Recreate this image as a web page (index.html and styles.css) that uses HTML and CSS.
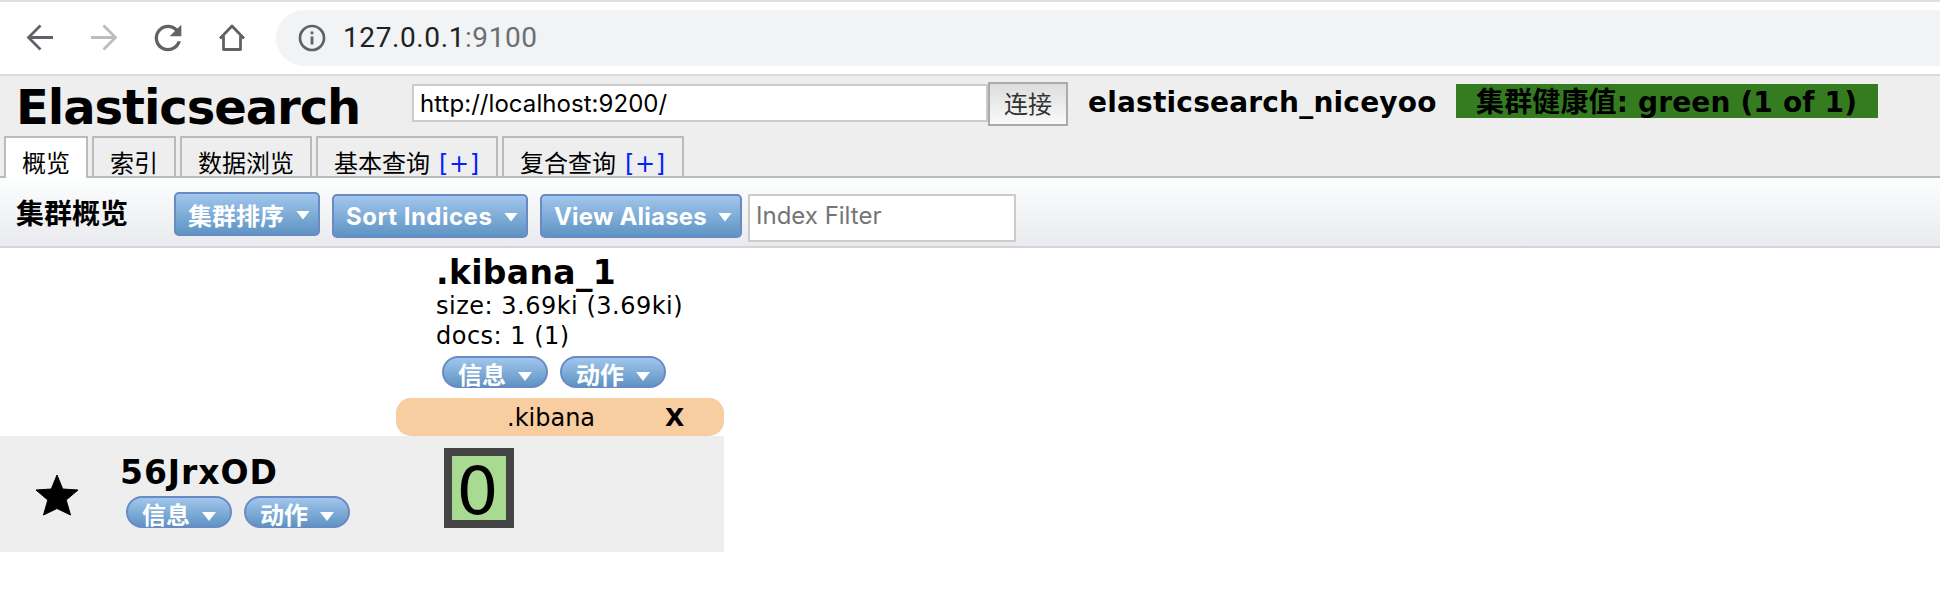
FILE: index.html
```html
<!DOCTYPE html>
<html lang="zh-CN">
<head>
<meta charset="utf-8">
<title>elasticsearch-head</title>
<link rel="stylesheet" href="styles.css">
</head>
<body>
<nav class="browser">
  <svg class="nav-icon" viewBox="0 0 40 40"><path d="M33 19.500H9M20.500 7.500l-12 12 12 12" fill="none" stroke="#5f6368" stroke-width="2.800"/></svg>
  <svg class="nav-icon" viewBox="0 0 40 40"><path d="M7 19.500h24M19.500 7.500l12 12-12 12" fill="none" stroke="#babcbe" stroke-width="2.800"/></svg>
  <svg class="nav-icon" viewBox="0 0 24 24"><path fill="#5f6368" d="M17.650 6.350C16.200 4.900 14.210 4 12 4c-4.420 0-7.990 3.580-7.990 8s3.570 8 7.990 8c3.730 0 6.840-2.550 7.730-6h-2.080c-.82 2.330-3.040 4-5.650 4-3.310 0-6-2.690-6-6s2.690-6 6-6c1.660 0 3.140.69 4.220 1.780L13 11h7V4l-2.350 2.350z"/></svg>
  <svg class="nav-icon" viewBox="0 0 40 40"><path d="M8 20.500L20 8l12 12.500M11.500 18v13.500h17V18" fill="none" stroke="#5f6368" stroke-width="2.800" stroke-linejoin="round"/></svg>
  <div class="address">
    <svg class="info-icon" viewBox="0 0 28 28"><circle cx="14" cy="14" r="12" fill="none" stroke="#5f6368" stroke-width="2.700"/><path d="M12.600 7.500h2.800v2.800h-2.800zM12.600 12.500h2.800v8h-2.800z" fill="#5f6368"/></svg>
    <span class="host">127.0.0.1<span class="port">:9100</span></span>
  </div>
</nav>
<header class="header">
  <div class="connect">
    <h1 class="brand">Elasticsearch</h1>
    <input class="uri" type="text" value="http://localhost:9200/">
    <button class="connect-button">连接</button>
    <span class="cluster-name">elasticsearch_niceyoo</span>
    <span class="health">集群健康值: green (1 of 1)</span>
  </div>
  <div class="tabs">
    <div class="tab active">概览</div>
    <div class="tab">索引</div>
    <div class="tab wide">数据浏览</div>
    <div class="tab plus">基本查询<a class="add">[+]</a></div>
    <div class="tab plus">复合查询<a class="add">[+]</a></div>
  </div>
</header>
<section class="toolbar">
  <h2 class="toolbar-title">集群概览</h2>
  <button class="menu sort-cluster">集群排序<i class="caret"></i></button>
  <button class="menu sort-indices">Sort Indices<i class="caret"></i></button>
  <button class="menu aliases">View Aliases<i class="caret"></i></button>
  <input class="filter" type="text" placeholder="Index Filter">
</section>
<main class="cluster">
  <div class="index-head">
    <div class="index-info">
      <div class="title index-title">.kibana_1</div>
      <div class="stat">size: 3.69ki (3.69ki)</div>
      <div class="stat">docs: 1 (1)</div>
      <div class="pills"><button class="pill">信息<i class="caret"></i></button><button class="pill">动作<i class="caret"></i></button></div>
    </div>
    <div class="alias"><span class="alias-name">.kibana</span><b class="remove">X</b></div>
  </div>
  <div class="node">
    <svg class="star" viewBox="0 0 44 42"><path d="M22 1l5.700 14 15.300 1-11.800 10 4.300 15L22 34.500 8.500 41l4.300-15L1 16l15.300-1z" stroke="#000" stroke-linejoin="round"/></svg>
    <div class="node-info">
      <div class="title node-title">56JrxOD</div>
      <div class="pills"><button class="pill">信息<i class="caret"></i></button><button class="pill">动作<i class="caret"></i></button></div>
    </div>
    <div class="shard">0</div>
  </div>
</main>
</body>
</html>
```
FILE: styles.css
```css
* { box-sizing: border-box; }
body { margin: 0; background: #fff; color: #000; font: 24px/30px "DejaVu Sans", "Noto Sans CJK SC", sans-serif; height: 594px; }
h1, h2 { margin: 0; }
button, input { margin: 0; padding: 0; border-radius: 0; outline: 0; flex: none; }

.browser { height: 76px; border-top: 2px solid #dfe0e5; border-bottom: 2px solid #dadbdf; padding: 8px 0 0 20px; display: flex; gap: 24px; }
.nav-icon { width: 40px; height: 40px; margin-top: 8px; flex: none; }
.address { flex: 1; height: 56px; border-radius: 28px 0 0 28px; background: #f1f3f4; display: flex; align-items: center; padding-left: 22px; }
.info-icon { width: 28px; height: 28px; }
.host { margin-left: 17px; font: 28px/56px Roboto, sans-serif; letter-spacing: .6px; color: #202124; white-space: nowrap; }
.port { color: #6b6e72; }

.header { height: 102px; background: #eee; border-bottom: 2px solid #bbb; }
.connect { height: 60px; padding-top: 6px; display: flex; align-items: flex-start; white-space: nowrap; }
.brand { width: 396px; margin: 5px 0 0 16px; font: bold 48px/40px "DejaVu Sans", sans-serif; letter-spacing: -1.050px; }
.uri { width: 576px; height: 38px; margin-top: 2px; border: 2px solid #ccc; padding: 0 6px; background: #fff; font: 24px "Inter", sans-serif; letter-spacing: .05px; }
.connect-button { width: 80px; height: 44px; padding-bottom: 4px; border: 2px solid #aaa; background: linear-gradient(#ddd, #fafafa); color: #333; font: 24px "Noto Sans CJK SC", sans-serif; }
.cluster-name { width: 368px; margin: 2px 0 0 20px; font: bold 28px/37px "DejaVu Sans", sans-serif; letter-spacing: .2px; }
.health { width: 422px; height: 34px; margin-top: 2px; padding-left: 20px; background: #357c21; font: bold 28px/37px "DejaVu Sans", "Noto Sans CJK SC", sans-serif; letter-spacing: .15px; }
.tabs { display: flex; gap: 4px; padding-left: 4px; }
.tab { width: 84px; height: 40px; border: 2px solid #bbb; border-bottom: 0; padding: 9px 0 0 16px; line-height: 30px; white-space: nowrap; font-family: "Noto Sans CJK SC", sans-serif; }
.tab.active { height: 42px; background: #fff; }
.tab.wide { width: 132px; }
.tab.plus { width: 182px; }
.add { margin-left: 9px; color: #0022ff; font: 24px/30px "DejaVu Sans", sans-serif; letter-spacing: .6px; }

.toolbar { height: 70px; display: flex; align-items: flex-start; padding: 16px 0 0 16px; border-bottom: 2px solid #d3d5d8; background: linear-gradient(#fdfefe, #e9eaed); }
.toolbar-title { width: 158px; margin-top: -1px; font: bold 28px/38px "Noto Sans CJK SC", sans-serif; }
.menu { display: flex; align-items: center; justify-content: space-between; height: 44px; border: 2px solid #6a8ac6; border-radius: 5px; padding: 0 8px 0 12px; background: linear-gradient(#a1c6ec, #5f94c3); color: #fff; font: bold 24px "Inter", "Noto Sans CJK SC", sans-serif; white-space: nowrap; }
.caret { width: 14px; height: 9px; background: #fff; clip-path: polygon(0 0, 100% 0, 50% 100%); }
.menu .caret { margin-top: 2px; }
.sort-cluster { width: 146px; margin: -2px 12px 0 0; }
.sort-indices { width: 196px; margin-right: 12px; letter-spacing: .5px; }
.aliases { width: 202px; margin-right: 6px; letter-spacing: .2px; }
.filter { width: 268px; height: 48px; border: 2px solid #ccc; background: #fff; padding: 0 6px 5px; font: 24px "Inter", sans-serif; }
.filter::placeholder { color: #757575; }

.cluster { width: 724px; }
.index-head { height: 188px; display: flex; flex-direction: column; padding-left: 396px; }
.index-info { height: 150px; padding: 7px 0 0 40px; }
.title { font-size: 33px; line-height: 36px; font-weight: bold; white-space: nowrap; }
.index-title { letter-spacing: .35px; }
.node-title { letter-spacing: .95px; }
.stat { white-space: nowrap; letter-spacing: .5px; }
.pills { display: flex; gap: 12px; padding-left: 6px; }
.index-info .pills { margin-top: 5px; }
.pill { width: 106px; height: 32px; display: flex; align-items: flex-start; justify-content: space-between; border: 2px solid #6a8ac6; border-radius: 16px; padding: 1px 14px 0; background: linear-gradient(#a1c6ec, #5f94c3); color: #fff; font: bold 24px/29px "Noto Sans CJK SC", sans-serif; }
.pill .caret { margin-top: 13px; }
.alias { height: 38px; border-radius: 15px; background: #f8cda0; display: flex; line-height: 40px; padding-left: 111px; }
.alias-name { width: 158px; }
.remove { font-size: 25px; }
.node { height: 116px; background: #eee; display: flex; align-items: flex-start; }
.star { width: 44px; height: 42px; margin: 38px 41px 0 35px; }
.node-info { width: 324px; padding-top: 19px; }
.node-info .pills { margin-top: 5px; }
.shard { width: 70px; height: 80px; margin-top: 12px; border: 8px solid #444; padding-right: 3px; background: #a8da92; font-size: 66px; line-height: 71px; display: flex; justify-content: center; }
```
